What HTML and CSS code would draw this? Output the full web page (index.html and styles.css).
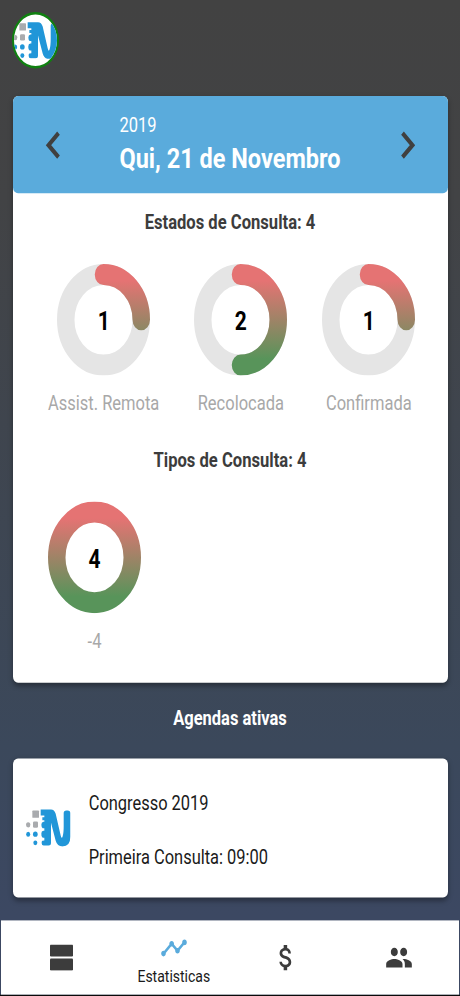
FILE: index.html
```html
<!DOCTYPE html>
<html lang="pt">
<head>
<meta charset="utf-8">
<title>Estatisticas</title>
<link rel="stylesheet" href="styles.css">
</head>
<body>
<svg class="defs" aria-hidden="true">
  <defs>
    <linearGradient id="heat" gradientUnits="userSpaceOnUse" x1="0" y1="0" x2="0" y2="93">
      <stop offset="0.15" stop-color="#e57373"/>
      <stop offset="0.85" stop-color="#58945a"/>
    </linearGradient>
    <symbol id="logo" viewBox="78 88 134 114" preserveAspectRatio="none">
      <g fill="#a9abae">
        <rect x="97" y="93" width="20" height="22" rx="2"/>
        <ellipse cx="84.500" cy="136" rx="6.500" ry="8"/>
        <rect x="99" y="126" width="15" height="19" rx="4"/>
      </g>
      <g fill="#2196d8">
        <ellipse cx="84.500" cy="164" rx="6" ry="7.500"/>
        <ellipse cx="106" cy="164" rx="7" ry="8"/>
        <ellipse cx="106" cy="190" rx="6" ry="7"/>
        <path d="M122 90H153Q163 90 167 103L182 168Q185 181 188 170Q191 160 191 140V101Q191 93 199 93H203Q211 93 211 101V172Q211 201 187 201Q172 201 167 184L153 130V191Q153 198 146 198H131Q125 198 125 191V187Q125 183 133 183V175H128Q123 170 124 162Q124 155 130 154H133V146H128Q124 143 124 136Q124 129 130 127H133V122H127V113H133V108H122Z"/>
      </g>
    </symbol>
  </defs>
</svg>
<div class="screen">
  <header class="top">
    <div class="avatar"><svg class="logo"><use href="#logo"/></svg></div>
  </header>
  <main class="content">
    <section class="card stats">
      <div class="date-bar">
        <svg class="chevron" viewBox="0 0 16 24"><path d="M13.500 2L3.500 12L13.500 22"/></svg>
        <div class="date">
          <div class="year">2019</div>
          <div class="day">Qui, 21 de Novembro</div>
        </div>
        <svg class="chevron" viewBox="0 0 16 24"><path d="M2.500 2L12.500 12L2.500 22"/></svg>
      </div>
      <h2 class="heading">Estados de Consulta: 4</h2>
      <div class="rings">
        <div class="item">
          <div class="ring">
            <svg viewBox="0 0 93 93"><circle class="track" cx="46.500" cy="46.500" r="37.750"/><path class="arc" d="M46.500 8.750A37.750 37.750 0 0 1 84.250 46.500"/></svg>
            <span class="value">1</span>
          </div>
          <div class="label">Assist. Remota</div>
        </div>
        <div class="item">
          <div class="ring">
            <svg viewBox="0 0 93 93"><circle class="track" cx="46.500" cy="46.500" r="37.750"/><path class="arc" d="M46.500 8.750A37.750 37.750 0 0 1 46.500 84.250"/></svg>
            <span class="value">2</span>
          </div>
          <div class="label">Recolocada</div>
        </div>
        <div class="item">
          <div class="ring">
            <svg viewBox="0 0 93 93"><circle class="track" cx="46.500" cy="46.500" r="37.750"/><path class="arc" d="M46.500 8.750A37.750 37.750 0 0 1 84.250 46.500"/></svg>
            <span class="value">1</span>
          </div>
          <div class="label">Confirmada</div>
        </div>
      </div>
      <h2 class="heading second">Tipos de Consulta: 4</h2>
      <div class="rings">
        <div class="item">
          <div class="ring">
            <svg viewBox="0 0 93 93"><circle class="arc" cx="46.500" cy="46.500" r="37.750"/></svg>
            <span class="value">4</span>
          </div>
          <div class="label">-4</div>
        </div>
      </div>
    </section>
    <h2 class="section-title">Agendas ativas</h2>
    <section class="card agenda">
      <svg class="logo"><use href="#logo"/></svg>
      <div class="agenda-text">
        <div>Congresso 2019</div>
        <div>Primeira Consulta: 09:00</div>
      </div>
    </section>
  </main>
  <nav class="tabs">
    <a class="tab"><svg class="icon agenda-icon" viewBox="0 0 23 22"><rect width="23" height="10" rx="1"/><rect y="11.800" width="23" height="10" rx="1"/></svg></a>
    <a class="tab active"><svg class="icon" viewBox="0 0 24 24"><path d="M23 8c0 1.100-.9 2-2 2-.18 0-.35-.02-.51-.07l-3.560 3.550c.05.16.07.34.07.52 0 1.100-.9 2-2 2s-2-.9-2-2c0-.18.02-.36.07-.52l-2.550-2.550c-.16.05-.34.07-.52.07s-.36-.02-.52-.07l-4.550 4.560c.05.16.07.33.07.51 0 1.100-.9 2-2 2s-2-.9-2-2 .9-2 2-2c.18 0 .35.02.51.07l4.560-4.550C8.020 9.360 8 9.180 8 9c0-1.100.9-2 2-2s2 .9 2 2c0 .18-.02.36-.07.52l2.550 2.550c.16-.05.34-.07.52-.07s.36.02.52.07l3.550-3.560C19.020 8.350 19 8.180 19 8c0-1.100.9-2 2-2s2 .9 2 2z"/></svg><span>Estatisticas</span></a>
    <a class="tab"><svg class="icon" viewBox="0 0 24 24"><path d="M11.800 10.900c-2.270-.59-3-1.200-3-2.150 0-1.090 1.010-1.850 2.700-1.850 1.780 0 2.440.85 2.500 2.100h2.210c-.07-1.720-1.120-3.300-3.210-3.810V3h-3v2.160c-1.940.42-3.500 1.680-3.500 3.610 0 2.310 1.910 3.460 4.700 4.130 2.500.6 3 1.480 3 2.410 0 .69-.49 1.790-2.700 1.790-2.060 0-2.870-.92-2.980-2.100h-2.200c.12 2.190 1.760 3.420 3.680 3.830V21h3v-2.150c1.950-.37 3.500-1.500 3.500-3.550 0-2.840-2.430-3.810-4.700-4.400z"/></svg></a>
    <a class="tab"><svg class="icon" viewBox="0 0 24 24"><path d="M16 11c1.660 0 2.990-1.340 2.990-3S17.660 5 16 5s-3 1.340-3 3 1.340 3 3 3zm-8 0c1.660 0 2.990-1.340 2.990-3S9.660 5 8 5 5 6.340 5 8s1.340 3 3 3zm0 2c-2.330 0-7 1.170-7 3.500V19h14v-2.500c0-2.330-4.670-3.500-7-3.500zm8 0c-.29 0-.62.02-.97.05 1.160.84 1.970 1.970 1.970 3.450V19h6v-2.500c0-2.330-4.670-3.500-7-3.500z"/></svg></a>
  </nav>
</div>
</body>
</html>
```

FILE: styles.css
```css
* { box-sizing: border-box; }

html, body {
  margin: 0;
  height: 996px;
  overflow: hidden;
  background: #424242;
}

.defs { display: block; width: 0; height: 0; }

/* The whole screen is 460x830, displayed 1.2 times taller. */
.screen {
  display: flex;
  flex-direction: column;
  width: 460px;
  height: 830px;
  transform: scaleY(1.2);
  transform-origin: 0 0;
  border-bottom: 1.5px solid #0a0a0a;
  background: linear-gradient(#424242 0%, #424345 20%, #3b485b 75%, #3c4862 92%);
  font-family: Roboto, "Liberation Sans", sans-serif;
  color: #1a1a1a;
  overflow: hidden;
}

.top {
  flex: none;
  height: 80px;
  padding: 10px 0 0 12px;
}

.avatar {
  display: flex;
  align-items: center;
  justify-content: center;
  width: 47px;
  height: 47px;
  border: 2px solid #108010;
  border-radius: 50%;
  background: #fff;
  overflow: hidden;
}

.logo { flex: none; width: 44.7px; height: 31.7px; }

.content { flex: 1; padding: 0 12.5px; }

.card {
  border-radius: 5px;
  background: #fff;
  box-shadow: 0 2px 5px rgba(0, 0, 0, 0.35);
}

.stats { height: 489px; }

.date-bar {
  display: flex;
  align-items: center;
  justify-content: space-between;
  height: 81.3px;
  padding: 0 32px;
  border-radius: 5px;
  background: #5aabdc;
  color: #fff;
}

.chevron {
  width: 16px;
  height: 24px;
  fill: none;
  stroke: #404040;
  stroke-width: 3.8;
}

.date { width: 221px; white-space: nowrap; }
.year { font-size: 16.5px; line-height: 22px; }
.day { font-size: 23.5px; line-height: 32px; font-weight: 700; }

.heading {
  margin: 15px 0 0;
  font-size: 16.6px;
  line-height: 20px;
  font-weight: 700;
  text-align: center;
  color: #3c3c3c;
}

.heading.second { margin-top: 27px; }

.rings { display: flex; gap: 35px; margin-top: 23.5px; padding-left: 35.5px; }

.item { display: flex; flex-direction: column; align-items: center; }

.ring { display: grid; width: 93px; height: 93px; }
.ring > * { grid-area: 1 / 1; }
.ring svg { width: 93px; height: 93px; }

.track, .arc { fill: none; stroke-width: 17.5; stroke-linecap: round; }
.track { stroke: #e5e5e5; }
.arc { stroke: url(#heat); }

.value {
  place-self: center;
  padding-top: 3px;
  font-size: 21px;
  font-weight: 700;
  color: #000;
}

.label { margin-top: 14.5px; font-size: 16.5px; line-height: 20px; color: #a8a8a8; white-space: nowrap; }
.heading.second { margin-top: 27px; }

.section-title {
  margin: 19.5px 0 23px;
  font-size: 16.5px;
  line-height: 20px;
  font-weight: 700;
  text-align: center;
  color: #fff;
}

.agenda {
  display: flex;
  align-items: center;
  gap: 18px;
  height: 116.5px;
  padding-left: 13.5px;
}

.agenda-text { display: grid; gap: 25px; padding-top: 5px; font-size: 16.45px; line-height: 20px; }

.tabs {
  display: grid;
  grid-template-columns: repeat(4, 112.4px);
  justify-content: center;
  align-items: center;
  flex: none;
  height: 62.5px;
  margin: 0 1px;
  background: #fff;
}

.tab { display: flex; flex-direction: column; align-items: center; font-size: 14px; line-height: 17px; }
.icon { width: 28px; height: 28px; fill: #3c3c3c; }
.agenda-icon { width: 23px; height: 22px; }
.active { padding-top: 2px; }
.active span { padding-top: 1px; }
.active .icon { fill: #5aabdc; }
```
